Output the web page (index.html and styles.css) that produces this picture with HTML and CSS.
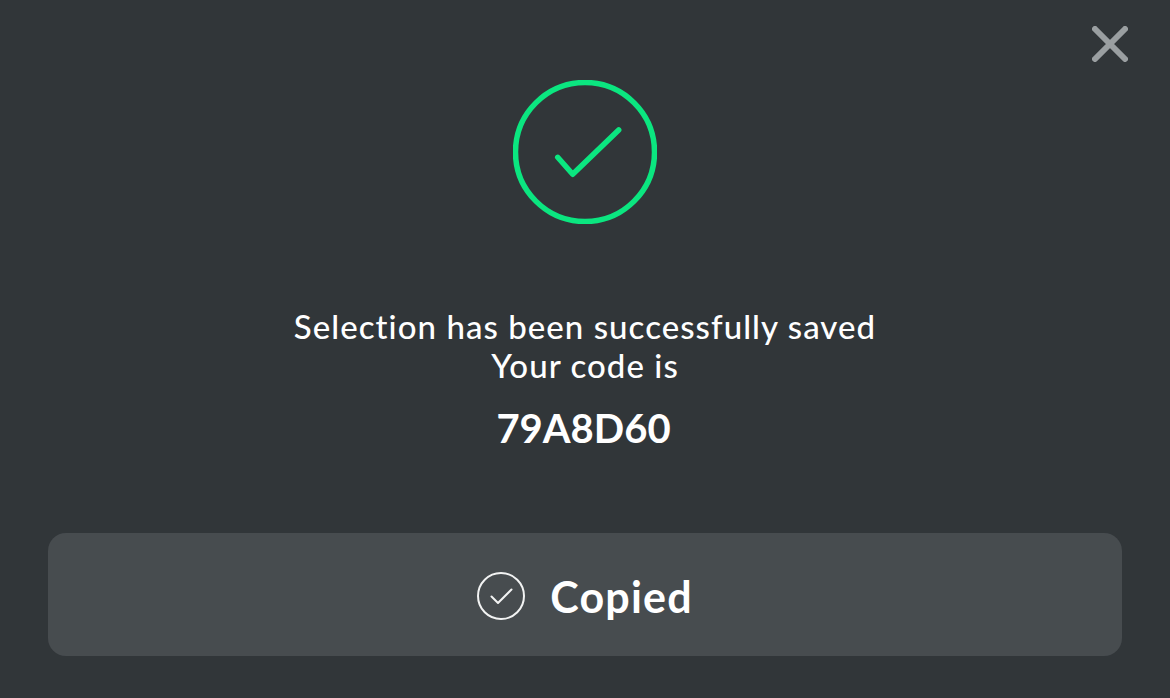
FILE: index.html
```html
<!DOCTYPE html>
<html lang="en">
<head>
<meta charset="utf-8">
<title>Selection saved</title>
<link rel="stylesheet" href="styles.css">
</head>
<body>
<main class="dialog">
  <button class="close" aria-label="Close">
    <svg width="36" height="36" viewBox="0 0 36 36"><path d="M3 3L33 33M33 3L3 33" fill="none" stroke="#9a9fa1" stroke-width="6" stroke-linecap="round"/></svg>
  </button>
  <svg class="success" width="144" height="144" viewBox="0 0 144 144">
    <circle cx="72" cy="72" r="69.500" fill="none" stroke="#0be680" stroke-width="5.500"/>
    <path d="M44.700 77.300L59.700 94.300L105.700 50" fill="none" stroke="#0be680" stroke-width="5.500" stroke-linecap="round" stroke-linejoin="round"/>
  </svg>
  <p class="message">Selection has been successfully saved<br>Your code is</p>
  <p class="code">79A8D60</p>
  <div class="copied">
    <svg width="48" height="48" viewBox="0 0 48 48">
      <circle cx="24" cy="24" r="23" fill="none" stroke="#f2f3f3" stroke-width="2"/>
      <path d="M14.500 24.500L21 31L34.500 17.500" fill="none" stroke="#f2f3f3" stroke-width="2" stroke-linecap="round" stroke-linejoin="round"/>
    </svg>
    <span class="copied-label">Copied</span>
  </div>
</main>
</body>
</html>
```
FILE: styles.css
```css
* { box-sizing: border-box; }
html, body { margin: 0; height: 100%; }
body { background: #313639; font-family: Lato, "Liberation Sans", sans-serif; color: #fff; overflow: hidden; }
.dialog { position: relative; height: 698px; padding: 80px 48px 0; display: flex; flex-direction: column; align-items: center; }
.close { position: absolute; top: 26px; right: 42px; width: 36px; height: 36px; padding: 0; border: 0; background: none; display: block; }
.close svg { display: block; }
.success { display: block; flex: none; }
.message { margin: 83px 0 0; font-size: 33px; line-height: 39px; font-weight: 500; letter-spacing: 1.05px; text-align: center; }
.code { margin: 20px 0 0 -3px; font-size: 40px; line-height: 46px; font-weight: 700; letter-spacing: 0; text-align: center; }
.copied { margin-top: 82px; width: 100%; height: 123px; flex: none; padding-top: 3px; border-radius: 18px; background: #474c4f; display: flex; align-items: center; justify-content: center; gap: 25px; }
.copied svg { display: block; }
.copied-label { font-size: 43px; font-weight: 700; letter-spacing: 1.200px; }
```
